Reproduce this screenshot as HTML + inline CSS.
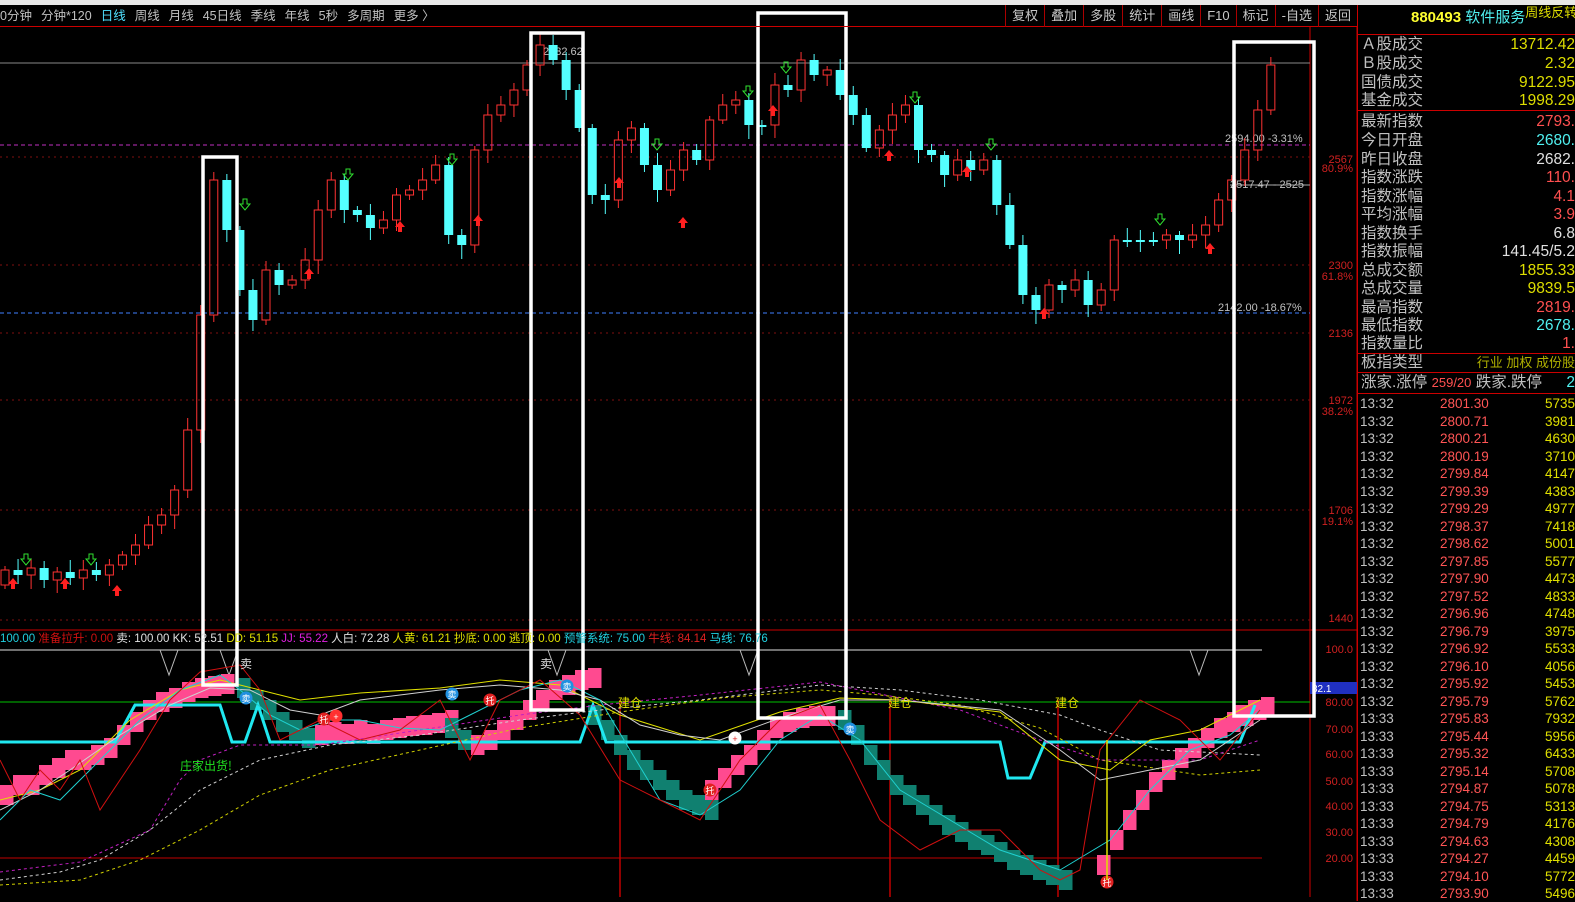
<!DOCTYPE html>
<html><head><meta charset="utf-8">
<style>
*{margin:0;padding:0;box-sizing:border-box}
body{width:1575px;height:901px;background:#000;overflow:hidden;position:relative;font-family:"Liberation Sans","Noto Sans CJK SC",sans-serif;color:#c0c0c0}
#strip{position:absolute;left:0;top:0;width:1575px;height:5px;background:#e8e8e8}
#tb{position:absolute;left:0;top:5px;width:1357px;height:22px;font-size:12.5px;line-height:22px;white-space:nowrap;border-bottom:1px solid #c00}
#tb span{margin-right:9px}
#btns{position:absolute;right:0;top:0;height:22px;display:flex}
#btns div{border-left:1px solid #a00;padding:0 6px;line-height:22px;font-size:13px;color:#c8c8c8}
#rp{position:absolute;left:1357px;top:5px;width:218px;height:896px;border-left:1px solid #c00;font-size:15.5px}
.r{position:absolute;left:3px;right:0;height:19px;line-height:19px;white-space:nowrap}
.r .v{position:absolute;right:0;top:0}
.sep{position:absolute;left:0;right:0;height:1px;background:#c00}
.t{position:absolute;left:3px;right:0;height:17px;line-height:17px;font-size:13.5px;white-space:nowrap}
.t .p{position:absolute;left:80px;color:#ff5555}
.t .q{position:absolute;right:0;color:#e0e000}
.y{color:#dede00}.rd{color:#ff5050}.cy{color:#50f0f0}.wh{color:#e0e0e0}
svg{position:absolute;left:0;top:0}
</style></head><body>
<div id="strip"></div>
<svg id="sv" width="1357" height="901" xmlns="http://www.w3.org/2000/svg"></svg>
<div id="tb"><span>0分钟</span><span>分钟*120</span><span style="color:#50e0ff">日线</span><span>周线</span><span>月线</span><span>45日线</span><span>季线</span><span>年线</span><span>5秒</span><span>多周期</span><span>更多 〉</span>
<div id="btns"><div>复权</div><div>叠加</div><div>多股</div><div>统计</div><div>画线</div><div>F10</div><div>标记</div><div>-自选</div><div>返回</div></div></div>
<div id="rp">
<div class="r" style="top:2px;height:22px;line-height:22px;text-align:left;padding-left:50px;font-size:15px"><b style="color:#ffff30">880493</b> <span class="cy">软件服务</span><span class="y" style="font-size:13px;position:relative;top:-5px">周线反转</span></div>
<div class="sep" style="top:29px"></div>
<div class="r" style="top:30px">Ａ股成交<span class="v y">13712.42</span></div>
<div class="r" style="top:49px">Ｂ股成交<span class="v y">2.32</span></div>
<div class="r" style="top:68px">国债成交<span class="v y">9122.95</span></div>
<div class="r" style="top:86px">基金成交<span class="v y">1998.29</span></div>
<div class="sep" style="top:105px"></div>
<div class="r" style="top:107px">最新指数<span class="v rd">2793.</span></div>
<div class="r" style="top:126px">今日开盘<span class="v cy">2680.</span></div>
<div class="r" style="top:145px">昨日收盘<span class="v wh">2682.</span></div>
<div class="r" style="top:163px">指数涨跌<span class="v rd">110.</span></div>
<div class="r" style="top:182px">指数涨幅<span class="v rd">4.1</span></div>
<div class="r" style="top:200px">平均涨幅<span class="v rd">3.9</span></div>
<div class="r" style="top:219px">指数换手<span class="v wh">6.8</span></div>
<div class="r" style="top:237px">指数振幅<span class="v wh">141.45/5.2</span></div>
<div class="r" style="top:256px">总成交额<span class="v y">1855.33</span></div>
<div class="r" style="top:274px">总成交量<span class="v y">9839.5</span></div>
<div class="r" style="top:293px">最高指数<span class="v rd">2819.</span></div>
<div class="r" style="top:311px">最低指数<span class="v cy">2678.</span></div>
<div class="r" style="top:329px">指数量比<span class="v rd">1.</span></div>
<div class="sep" style="top:348px"></div>
<div class="r" style="top:348px">板指类型<span class="v" style="color:#b0b000;font-size:13px">行业 加权 成份股</span></div>
<div class="sep" style="top:367px"></div>
<div class="r" style="top:368px">涨家.涨停 <span class="rd" style="font-size:13px">259/20</span> 跌家.跌停 <span class="v cy">2</span></div>
<div class="sep" style="top:388px"></div>
</div>
<script>
(function(){
var S=document.getElementById('sv'),h='';
function L(x1,y1,x2,y2,c,w,d){h+='<line x1="'+x1+'" y1="'+y1+'" x2="'+x2+'" y2="'+y2+'" stroke="'+c+'" stroke-width="'+(w||1)+'"'+(d?' stroke-dasharray="'+d+'"':'')+'/>';}
function T(x,y,s,c,fs,a){h+='<text x="'+x+'" y="'+y+'" fill="'+c+'" font-size="'+(fs||11)+'" font-family="Liberation Sans,Noto Sans CJK SC,sans-serif"'+(a?' text-anchor="'+a+'"':'')+'>'+s+'</text>';}
L(1310,27,1310,897,'#c00');L(0,630,1357,630,'#c00');L(1357,27,1357,901,'#c00');
[157,265,333,400,510,620].forEach(function(y){L(0,y,1310,y,'#801010',1,'2,4');});
L(0,63,1310,63,'#888');L(0,145,1310,145,'#c030c0',1,'4,3');L(0,313,1310,313,'#4080ff',1,'4,3');
L(1230,185,1310,185,'#aaa');
[[2567,163],['80.9%',172],[2300,269],['61.8%',280],[2136,337],[1972,404],['38.2%',415],[1706,514],['19.1%',525],[1440,622]].forEach(function(a){T(1353,a[1],a[0],'#d02020',11,'end');});
T(1225,142,'2594.00 -3.31%','#c0c0c0',11);T(1230,188,'2517.47 - 2525','#c0c0c0',11);T(1218,311,'2142.00 -18.67%','#c0c0c0',11);
T(543,55,'2832.62','#c0c0c0',11);
var cl=[570,575,568,580,572,578,570,575,565,555,545,525,515,490,430,315,180,230,290,320,270,285,280,260,210,180,210,215,228,220,195,190,180,165,235,245,150,115,105,90,65,45,60,90,128,195,200,140,128,165,190,170,150,160,120,105,100,125,125,85,90,60,75,70,95,115,148,130,115,105,150,155,175,160,170,160,205,245,295,310,285,290,280,305,290,240,240,240,240,235,240,235,225,200,180,150,110,65];
var prev=585;
for(var i=0;i<cl.length;i++){var x=5+i*13.05,c=cl[i],o=prev;if(i==16)o=315;var up=c<o;var bt=Math.min(o,c),bb=Math.max(o,c);if(bb-bt<2)bb=bt+2;
var hi=bt-4-(i*7%9),lo=bb+4+(i*5%11);
if(up){L(x,hi,x,bt,'#ff3232');L(x,bb,x,lo,'#ff3232');h+='<rect x="'+(x-4)+'" y="'+bt+'" width="8" height="'+(bb-bt)+'" fill="none" stroke="#ff3232"/>';}
else{L(x,hi,x,lo,'#54ffff');h+='<rect x="'+(x-4.5)+'" y="'+bt+'" width="9" height="'+(bb-bt)+'" fill="#54ffff"/>';}
prev=c;}
[[13,585,'r'],[65,585,'r'],[117,592,'r'],[309,275,'r'],[400,228,'r'],[478,222,'r'],[619,184,'r'],[683,224,'r'],[773,112,'r'],[889,157,'r'],[967,173,'r'],[1044,315,'r'],[1210,250,'r'],[26,560,'g'],[91,560,'g'],[245,205,'g'],[348,175,'g'],[452,160,'g'],[657,145,'g'],[748,92,'g'],[786,68,'g'],[915,98,'g'],[991,145,'g'],[1160,220,'g']].forEach(function(a){var x=a[0],y=a[1];if(a[2]=='r')h+='<path d="M'+x+' '+(y-7)+'l-5 6h3v5h4v-5h3z" fill="#ff2020"/>';else h+='<path d="M'+(x-2)+' '+(y-6)+'h4v5h3l-5 6-5-6h3z" fill="none" stroke="#30e030"/>';});
L(0,650,1262,650,'#e0e0e0');L(0,702,1310,702,'#00c000');L(0,858,1262,858,'#c00000');
[['100.0',653],['80.00',706],['70.00',733],['60.00',758],['50.00',785],['40.00',810],['30.00',836],['20.00',862]].forEach(function(a){T(1353,a[1],a[0],'#d02020',11,'end');});
h+='<rect x="1310" y="682" width="47" height="12" fill="#2030c0"/>';T(1312,692,'82.1','#fff',10);
[620,890,1058].forEach(function(x){L(x,700,x,897,'#c00000',1.5);});
[[160,650],[220,650],[548,650],[740,650],[1190,650]].forEach(function(a){h+='<polyline points="'+(a[0])+','+a[1]+' '+(a[0]+9)+','+(a[1]+25)+' '+(a[0]+18)+','+a[1]+'" fill="none" stroke="#bbb"/>';});
function blocks(x0,ys,col){for(var k=0;k<ys.length;k++){h+='<rect x="'+(x0+k*13)+'" y="'+ys[k]+'" width="13.5" height="20" fill="'+col+'"/>';}}
blocks(0,[785,775,775,765,758,750,750,745,738,725,712,700,692,688,682,678,676,674],'#ff4a90');
blocks(237,[678,690,700,712,720,728],'#108070');
blocks(315,[725,722,724,720,724,720,718,716,715,713,710],'#ff4a90');
blocks(445,[718,730],'#108070');
blocks(471,[735,730,720,710,700,690,680,675,670,668],'#ff4a90');
blocks(588,[705,720,735,750,760,770,780,790,795,800],'#108070');
blocks(705,[780,768,755,745,730,718,712,708,706,706],'#ff4a90');
blocks(838,[710,725,745,760,775,785,795,805,815,822,830,835,842,850,855,860,865,870],'#108070');
blocks(1097,[855,830,810,790,772,760,748,738,728,718,712,706,700],'#ff4a90');
blocks(1235,[705,700,697],'#ff4a90');
h+='<polyline points="0,742 115,742 135,705 220,705 232,742 245,742 258,705 270,742 580,742 593,705 606,742 1000,742 1008,778 1030,778 1045,742 1240,742 1255,705" fill="none" stroke="#20e8f0" stroke-width="3"/>';
function pl(pts,c,w,d){h+='<polyline points="'+pts+'" fill="none" stroke="'+c+'" stroke-width="'+(w||1)+'"'+(d?' stroke-dasharray="'+d+'"':'')+'/>';}
pl('0,880 60,872 100,860 150,830 200,790 260,760 330,745 420,735 520,720 600,710 700,700 820,685 900,690 980,700 1060,715 1100,730 1160,750 1260,755','#d0d0d0',1,'3,3');
pl('0,885 80,880 140,860 200,830 260,795 330,770 420,750 520,728 620,712 720,698 820,690 880,695 960,705 1040,728 1100,760 1200,775 1260,770','#d0d000',1,'3,3');
pl('0,872 80,862 150,830 180,780 200,760 240,745 320,745 420,730 520,715 600,705 700,695 820,682 860,690 960,710 1040,740 1100,760 1200,760 1260,740','#c020c0',1,'3,3');
pl('0,800 40,790 80,770 130,720 180,690 220,680 260,690 300,700 360,693 440,688 500,680 560,685 620,715 700,740 780,712 840,698 900,700 1000,712 1060,760 1110,770 1150,740 1200,730 1260,700','#e0e000',1);
pl('0,810 40,790 70,770 120,735 170,705 210,688 250,690 290,710 320,715 360,700 440,690 500,685 560,690 600,700 640,725 680,735 720,740 780,718 840,700 900,700 1000,710 1060,750 1100,780 1150,770 1200,760 1260,720','#d0d0d0',1);
pl('0,820 30,790 60,800 100,760 140,720 180,690 220,675 240,690 270,715 300,730 330,720 360,720 400,728 440,730 470,715 520,690 560,680 600,700 630,750 660,800 700,815 740,790 780,740 820,715 860,740 900,790 950,820 1000,850 1060,870 1110,840 1150,790 1190,750 1230,735 1260,710','#20d0d0',1);
pl('0,760 20,800 40,770 60,790 80,760 100,810 140,750 170,700 200,672 240,665 260,690 280,740 320,720 360,740 400,730 440,700 470,760 500,700 540,680 580,715 620,780 660,800 700,820 740,760 780,720 820,705 850,760 880,820 920,850 960,830 1000,830 1040,870 1060,880 1080,870 1100,750 1140,700 1180,720 1220,760 1260,710','#d01010',1);
h+='<text x="180" y="770" fill="#20e020" font-size="12" font-family="Noto Sans CJK SC,sans-serif">庄家出货!</text>';
T(618,707,'建仓','#e0e000',12);T(888,707,'建仓','#e0e000',12);T(1055,707,'建仓','#e0e000',12);
T(240,668,'卖','#e0e0e0',12);T(540,668,'卖','#e0e0e0',12);
[[246,698,'#2090e0','卖'],[452,694,'#2090e0','卖'],[567,686,'#2090e0','卖'],[850,729,'#2090e0','卖'],[324,719,'#e02020','托'],[490,700,'#e02020','托'],[710,790,'#e02020','托'],[1107,882,'#e02020','托'],[336,716,'#ff3030','+'],[735,738,'#fff','+']].forEach(function(a){h+='<circle cx="'+a[0]+'" cy="'+a[1]+'" r="6.5" fill="'+a[2]+'"/>';T(a[0],a[1]+4,a[3],a[2]=='#fff'?'#e02020':'#fff',9,'middle');});
L(1107,740,1107,880,'#e0e000',1.5);
[[203,157,34,528],[531,33,52,677],[758,13,88,705],[1234,42,80,674]].forEach(function(r){h+='<rect x="'+r[0]+'" y="'+r[1]+'" width="'+r[2]+'" height="'+r[3]+'" fill="none" stroke="#fff" stroke-width="3.5"/>';});
h+='<text x="0" y="642" font-size="11.5" font-family="Liberation Sans,Noto Sans CJK SC,sans-serif"><tspan fill="#20d0e0">100.00 </tspan><tspan fill="#d01010">准备拉升: 0.00 </tspan><tspan fill="#e0e0e0">卖: 100.00 KK: 52.51 </tspan><tspan fill="#e0e000">DD: 51.15 </tspan><tspan fill="#e020e0">JJ: 55.22 </tspan><tspan fill="#e0e0e0">人白: 72.28 </tspan><tspan fill="#e0e000">人黄: 61.21 抄底: 0.00 逃顶: 0.00 </tspan><tspan fill="#20d0e0">预警系统: 75.00 </tspan><tspan fill="#e02020">牛线: 84.14 </tspan><tspan fill="#20d0e0">马线: 76.76</tspan></text>';
S.innerHTML=h;
})();
</script>
<div style="position:absolute;left:1357px;top:395px;width:218px">
<div class="t" style="top:0px">13:32<span class="p">2801.30</span><span class="q">5735</span></div>
<div class="t" style="top:17.5px">13:32<span class="p">2800.71</span><span class="q">3981</span></div>
<div class="t" style="top:35px">13:32<span class="p">2800.21</span><span class="q">4630</span></div>
<div class="t" style="top:52.5px">13:32<span class="p">2800.19</span><span class="q">3710</span></div>
<div class="t" style="top:70px">13:32<span class="p">2799.84</span><span class="q">4147</span></div>
<div class="t" style="top:87.5px">13:32<span class="p">2799.39</span><span class="q">4383</span></div>
<div class="t" style="top:105px">13:32<span class="p">2799.29</span><span class="q">4977</span></div>
<div class="t" style="top:122.5px">13:32<span class="p">2798.37</span><span class="q">7418</span></div>
<div class="t" style="top:140px">13:32<span class="p">2798.62</span><span class="q">5001</span></div>
<div class="t" style="top:157.5px">13:32<span class="p">2797.85</span><span class="q">5577</span></div>
<div class="t" style="top:175px">13:32<span class="p">2797.90</span><span class="q">4473</span></div>
<div class="t" style="top:192.5px">13:32<span class="p">2797.52</span><span class="q">4833</span></div>
<div class="t" style="top:210px">13:32<span class="p">2796.96</span><span class="q">4748</span></div>
<div class="t" style="top:227.5px">13:32<span class="p">2796.79</span><span class="q">3975</span></div>
<div class="t" style="top:245px">13:32<span class="p">2796.92</span><span class="q">5533</span></div>
<div class="t" style="top:262.5px">13:32<span class="p">2796.10</span><span class="q">4056</span></div>
<div class="t" style="top:280px">13:32<span class="p">2795.92</span><span class="q">5453</span></div>
<div class="t" style="top:297.5px">13:32<span class="p">2795.79</span><span class="q">5762</span></div>
<div class="t" style="top:315px">13:33<span class="p">2795.83</span><span class="q">7932</span></div>
<div class="t" style="top:332.5px">13:33<span class="p">2795.44</span><span class="q">5956</span></div>
<div class="t" style="top:350px">13:33<span class="p">2795.32</span><span class="q">6433</span></div>
<div class="t" style="top:367.5px">13:33<span class="p">2795.14</span><span class="q">5708</span></div>
<div class="t" style="top:385px">13:33<span class="p">2794.87</span><span class="q">5078</span></div>
<div class="t" style="top:402.5px">13:33<span class="p">2794.75</span><span class="q">5313</span></div>
<div class="t" style="top:420px">13:33<span class="p">2794.79</span><span class="q">4176</span></div>
<div class="t" style="top:437.5px">13:33<span class="p">2794.63</span><span class="q">4308</span></div>
<div class="t" style="top:455px">13:33<span class="p">2794.27</span><span class="q">4459</span></div>
<div class="t" style="top:472.5px">13:33<span class="p">2794.10</span><span class="q">5772</span></div>
<div class="t" style="top:490px">13:33<span class="p">2793.90</span><span class="q">5496</span></div>
</div>
</body></html>
